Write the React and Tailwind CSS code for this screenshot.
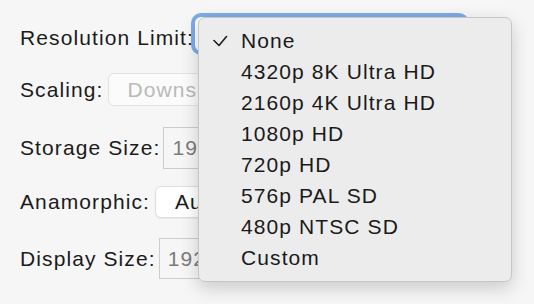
const items = [
  "None",
  "4320p 8K Ultra HD",
  "2160p 4K Ultra HD",
  "1080p HD",
  "720p HD",
  "576p PAL SD",
  "480p NTSC SD",
  "Custom",
];

function Check() {
  return (
    <svg className="absolute left-[14px] top-[10px] w-[16px] h-[13px]" viewBox="0 0 16 13" fill="none">
      <path d="M1 5.5 L6 10.5 L13.5 1.5" stroke="#1d1d1d" strokeWidth="1.6" strokeLinecap="round" strokeLinejoin="round" />
    </svg>
  );
}

export default function App() {
  return (
    <div
      className="relative w-[534px] h-[304px] overflow-hidden bg-[#f6f6f6] text-[21px] leading-[24px] tracking-[1.1px] text-[#1b1b1b]"
      style={{ fontFamily: '"Liberation Sans", Arial, sans-serif' }}
    >
      <div className="flex flex-col pt-[13px] pl-[20px]">
        {/* Resolution Limit */}
        <div className="flex items-center gap-[1px] h-[49px]">
          <span>Resolution Limit:</span>
          <div className="self-start mt-[4px] w-[270px] h-[34px] rounded-[6px] bg-white ring-4 ring-[#7eaaea]" />
        </div>

        {/* Scaling */}
        <div className="flex items-center gap-[4px] h-[55px]">
          <span>Scaling:</span>
          <div className="flex items-center h-[33px] w-[100px] rounded-[6px] border border-[#e2e2e2] bg-[#fbfbfb] pl-[19px] text-[#b9b9b9] whitespace-nowrap overflow-hidden">
            Downs
          </div>
        </div>

        {/* Storage Size */}
        <div className="flex items-center gap-[3px] h-[62px]">
          <span>Storage Size:</span>
          <div className="flex items-center h-[42px] w-[46px] border border-[#cdcdcd] bg-[#f6f6f6] pl-[8px] text-[#7b7b7b] whitespace-nowrap overflow-hidden">
            192
          </div>
        </div>

        {/* Anamorphic */}
        <div className="flex items-center gap-[5px] h-[46px]">
          <span>Anamorphic:</span>
          <div className="flex items-center h-[32px] w-[52px] rounded-[6px] border border-[#dedede] bg-white pl-[19px] whitespace-nowrap overflow-hidden shadow-[0_1px_1px_rgba(0,0,0,0.06)]">
            Au
          </div>
        </div>

        {/* Display Size */}
        <div className="flex items-center gap-[3px] h-[67px]">
          <span>Display Size:</span>
          <div className="flex items-center h-[41px] w-[48px] border border-[#cdcdcd] bg-[#f6f6f6] pl-[8px] text-[#7b7b7b] whitespace-nowrap overflow-hidden">
            192
          </div>
        </div>
      </div>

      {/* Popup menu */}
      <div className="absolute left-[198px] top-[17px] w-[314px] h-[265px] rounded-[7px] border border-[#c6c6c6] bg-[#ececec] pt-[7px] shadow-[0_6px_18px_rgba(0,0,0,0.18)]">
        {items.map((item, i) => (
          <div key={item} className="relative flex items-center h-[31px] pl-[42px] text-[#1a1a1a] whitespace-nowrap">
            {i === 0 && <Check />}
            {item}
          </div>
        ))}
      </div>
    </div>
  );
}
